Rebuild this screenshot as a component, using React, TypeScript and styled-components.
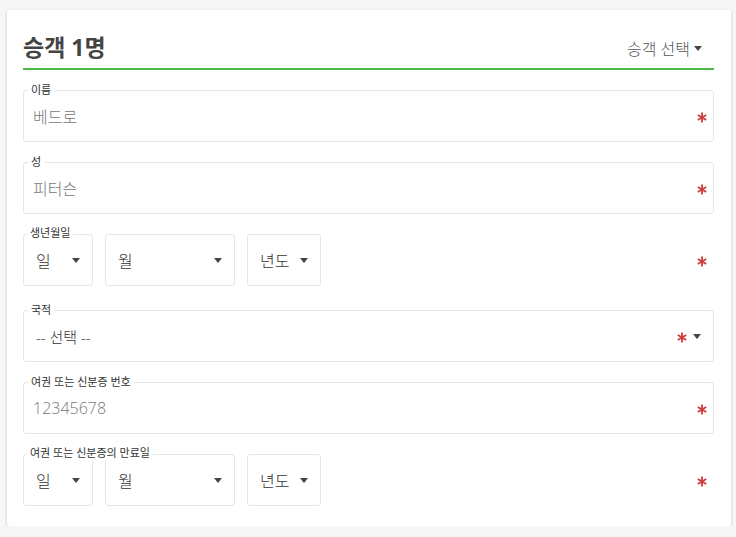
import React from "react";
import styled, { createGlobalStyle } from "styled-components";

const GlobalStyle = createGlobalStyle`
  body {
    margin: 0;
    background: #f6f6f6;
    font-family: "Open Sans", "Noto Sans CJK KR", sans-serif;
  }
`;

const Required = () => (
  <StAsterisk viewBox="0 0 10 11" aria-hidden>
    <line x1="5" y1="0.5" x2="5" y2="10.5" />
    <line x1="0.8" y1="3" x2="9.2" y2="8" />
    <line x1="0.8" y1="8" x2="9.2" y2="3" />
  </StAsterisk>
);

const DateField = ({ label }: { label: string }) => (
  <StDateRow>
    <StLegend>{label}</StLegend>
    <StSelectBox $width={70}>
      <span>일</span>
      <StCaret />
    </StSelectBox>
    <StSelectBox $width={130}>
      <span>월</span>
      <StCaret />
    </StSelectBox>
    <StSelectBox $width={74}>
      <span>년도</span>
      <StCaret />
    </StSelectBox>
    <StRowEnd>
      <Required />
    </StRowEnd>
  </StDateRow>
);

const TextField = ({ label, value }: { label: string; value: string }) => (
  <StField>
    <StLegend>{label}</StLegend>
    <StValue>{value}</StValue>
    <Required />
  </StField>
);

export default function App() {
  return (
    <>
      <GlobalStyle />
      <StCard>
        <StHeader>
          <StTitle>승객 1명</StTitle>
          <StPicker>
            승객 선택
            <StCaret />
          </StPicker>
        </StHeader>
        <StForm>
          <TextField label="이름" value="베드로" />
          <TextField label="성" value="피터슨" />
          <DateField label="생년월일" />
          <StField>
            <StLegend>국적</StLegend>
            <StSelectValue>-- 선택 --</StSelectValue>
            <StEnd>
              <Required />
              <StCaret />
            </StEnd>
          </StField>
          <TextField label="여권 또는 신분증 번호" value="12345678" />
          <DateField label="여권 또는 신분증의 만료일" />
        </StForm>
      </StCard>
    </>
  );
}

const StCard = styled.div`
  margin: 10px 5px 0 7px;
  padding: 22px 17px 0 16px;
  background: #fff;
  border-radius: 2px;
  box-shadow: 0 1px 3px rgba(0, 0, 0, 0.22);
`;

const StHeader = styled.div`
  display: flex;
  align-items: center;
  justify-content: space-between;
  height: 28px;
  padding: 0 12px 8px 0;
  border-bottom: 2px solid #4cb848;
`;

const StTitle = styled.h2`
  margin: 0;
  font-size: 23px;
  font-weight: 700;
  color: #444;
`;

const StPicker = styled.div`
  display: flex;
  align-items: center;
  gap: 4px;
  margin-top: 4px;
  font-size: 16px;
  font-weight: 300;
  color: #555;
`;

const StForm = styled.div`
  display: flex;
  flex-direction: column;
  padding: 20px 0 20px;
`;

const StField = styled.div`
  position: relative;
  display: flex;
  align-items: center;
  justify-content: space-between;
  box-sizing: border-box;
  height: 52px;
  margin-bottom: 20px;
  padding: 0 6px 0 9px;
  border: 1px solid #e6e6e6;
  border-radius: 3px;
`;

const StLegend = styled.span`
  position: absolute;
  top: -8px;
  left: 4px;
  padding: 0 3px;
  background: #fff;
  font-size: 11px;
  line-height: 14px;
  color: #333;
  white-space: nowrap;
  z-index: 1;
`;

const StValue = styled.span`
  font-size: 16px;
  font-weight: 300;
  color: #777;
`;

const StSelectValue = styled.span`
  padding-left: 3px;
  font-size: 15px;
  font-weight: 300;
  color: #333;
`;

const StEnd = styled.div`
  display: flex;
  align-items: center;
  gap: 6px;
  padding-right: 6px;
`;

const StDateRow = styled.div`
  position: relative;
  display: flex;
  gap: 12px;
  height: 52px;
  margin-bottom: 24px;
  &:last-child {
    margin-bottom: 0;
  }
`;

const StSelectBox = styled.div<{ $width: number }>`
  display: flex;
  align-items: center;
  justify-content: space-between;
  box-sizing: border-box;
  width: ${(p) => p.$width}px;
  padding: 0 12px;
  border: 1px solid #e6e6e6;
  border-radius: 3px;
  font-size: 16px;
  font-weight: 300;
  color: #333;
`;

const StRowEnd = styled.div`
  display: flex;
  align-items: center;
  margin-left: auto;
  padding-right: 7px;
`;

const StCaret = styled.span`
  display: inline-block;
  width: 0;
  height: 0;
  border-left: 4px solid transparent;
  border-right: 4px solid transparent;
  border-top: 5px solid #444;
`;

const StAsterisk = styled.svg`
  width: 10px;
  height: 11px;
  margin-top: 2px;
  stroke: #cc3b3b;
  stroke-width: 1.8;
  fill: none;
`;
